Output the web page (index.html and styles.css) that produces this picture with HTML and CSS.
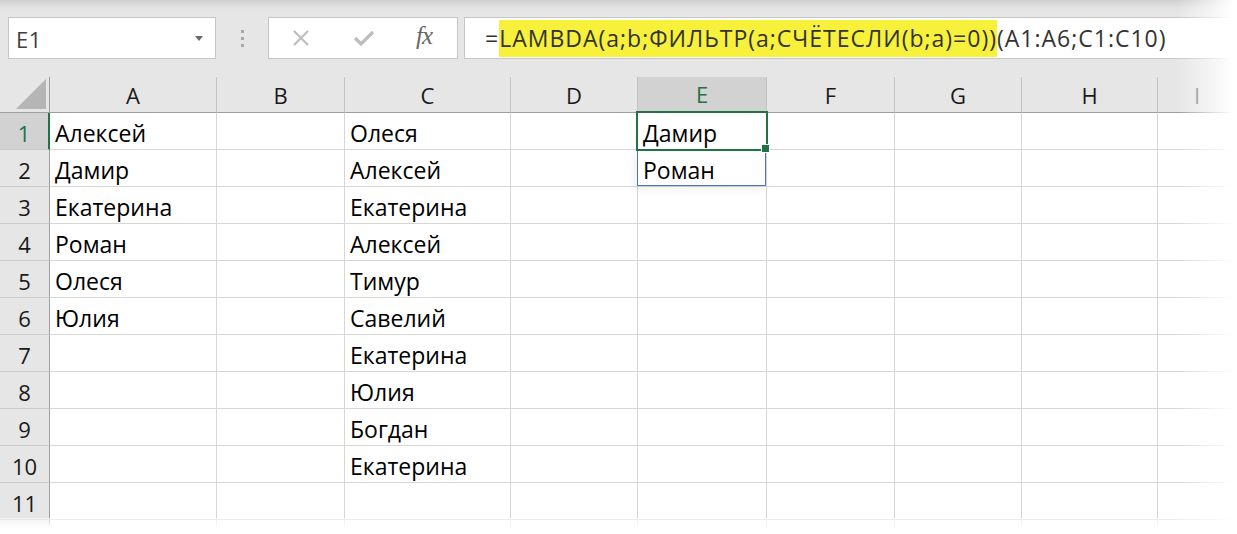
FILE: index.html
```html
<!DOCTYPE html>
<html lang="ru">
<head>
<meta charset="utf-8">
<title>Excel LAMBDA</title>
<link rel="stylesheet" href="styles.css">
</head>
<body>
<div class="app">
  <div class="toolbar">
    <div class="namebox">
      <span class="namebox-text">E1</span>
      <svg class="caret" width="8" height="5" viewBox="0 0 8 5"><polygon points="0,0 8,0 4,5" fill="#6b6b6b"/></svg>
    </div>
    <div class="grip"><i></i><i></i><i></i></div>
    <div class="fxbox">
      <svg class="ic" width="18" height="18" viewBox="0 0 18 18"><path d="M2 2 L16 16 M16 2 L2 16" stroke="#bdbdbd" stroke-width="2.2" fill="none"/></svg>
      <svg class="ic" width="22" height="18" viewBox="0 0 22 18"><path d="M2 9 L8 15 L20 3" stroke="#bdbdbd" stroke-width="3.2" fill="none"/></svg>
      <span class="fx">fx</span>
    </div>
    <div class="formula"><span class="eq">=</span><span class="hl">LAMBDA(a;b;ФИЛЬТР(a;СЧЁТЕСЛИ(b;a)=0))</span><span>(A1:A6;C1:C10)</span></div>
  </div>

  <div class="sheet">
    <div class="corner"><svg width="30" height="30" viewBox="0 0 30 30"><polygon points="0,30 30,30 30,0" fill="#b5b5b5"/></svg></div>
    <div class="ch">A</div><div class="ch">B</div><div class="ch">C</div><div class="ch">D</div><div class="ch ch-sel">E</div><div class="ch">F</div><div class="ch">G</div><div class="ch">H</div><div class="ch ch-last">I</div>

    <div class="rh rh-sel">1</div><div class="c">Алексей</div><div class="c"></div><div class="c">Олеся</div><div class="c"></div><div class="c c-active">Дамир</div><div class="c"></div><div class="c"></div><div class="c"></div><div class="c"></div>
    <div class="rh">2</div><div class="c">Дамир</div><div class="c"></div><div class="c">Алексей</div><div class="c"></div><div class="c c-spill">Роман</div><div class="c"></div><div class="c"></div><div class="c"></div><div class="c"></div>
    <div class="rh">3</div><div class="c">Екатерина</div><div class="c"></div><div class="c">Екатерина</div><div class="c"></div><div class="c"></div><div class="c"></div><div class="c"></div><div class="c"></div><div class="c"></div>
    <div class="rh">4</div><div class="c">Роман</div><div class="c"></div><div class="c">Алексей</div><div class="c"></div><div class="c"></div><div class="c"></div><div class="c"></div><div class="c"></div><div class="c"></div>
    <div class="rh">5</div><div class="c">Олеся</div><div class="c"></div><div class="c">Тимур</div><div class="c"></div><div class="c"></div><div class="c"></div><div class="c"></div><div class="c"></div><div class="c"></div>
    <div class="rh">6</div><div class="c">Юлия</div><div class="c"></div><div class="c">Савелий</div><div class="c"></div><div class="c"></div><div class="c"></div><div class="c"></div><div class="c"></div><div class="c"></div>
    <div class="rh">7</div><div class="c"></div><div class="c"></div><div class="c">Екатерина</div><div class="c"></div><div class="c"></div><div class="c"></div><div class="c"></div><div class="c"></div><div class="c"></div>
    <div class="rh">8</div><div class="c"></div><div class="c"></div><div class="c">Юлия</div><div class="c"></div><div class="c"></div><div class="c"></div><div class="c"></div><div class="c"></div><div class="c"></div>
    <div class="rh">9</div><div class="c"></div><div class="c"></div><div class="c">Богдан</div><div class="c"></div><div class="c"></div><div class="c"></div><div class="c"></div><div class="c"></div><div class="c"></div>
    <div class="rh">10</div><div class="c"></div><div class="c"></div><div class="c">Екатерина</div><div class="c"></div><div class="c"></div><div class="c"></div><div class="c"></div><div class="c"></div><div class="c"></div>
    <div class="rh">11</div><div class="c"></div><div class="c"></div><div class="c"></div><div class="c"></div><div class="c"></div><div class="c"></div><div class="c"></div><div class="c"></div><div class="c"></div>
    <div class="rh"></div><div class="c"></div><div class="c"></div><div class="c"></div><div class="c"></div><div class="c"></div><div class="c"></div><div class="c"></div><div class="c"></div><div class="c"></div>
  </div>

  <div class="fade-right"></div>
  <div class="fade-bottom"></div>
</div>
</body>
</html>
```

FILE: styles.css
```css
* { box-sizing: border-box; }
html, body { margin: 0; padding: 0; background: #fff; }
body { font-family: "Open Sans", "Noto Sans", sans-serif; overflow: hidden; }

.app {
  position: relative;
  width: 1237px;
  height: 534px;
  overflow: hidden;
}

.toolbar {
  height: 77px;
  background: linear-gradient(#cfcfcf 0px, #e2e2e2 8px, #e6e6e6 14px);
  display: flex;
  align-items: flex-start;
  padding: 17px 0 0 8px;
}

.namebox {
  width: 208px;
  height: 42px;
  background: #fff;
  border: 1px solid #c6c6c6;
  display: flex;
  align-items: center;
  justify-content: space-between;
  padding: 0 12px 0 7px;
}
.namebox-text { font-size: 22px; color: #404040; letter-spacing: 0.5px; margin-top: 1px; }
.caret { margin-top: 1px; }

.grip {
  width: 52px;
  height: 42px;
  display: flex;
  flex-direction: column;
  align-items: center;
  justify-content: center;
  gap: 4px;
}
.grip i { display: block; width: 3px; height: 3px; background: #a8a8a8; }

.fxbox {
  width: 190px;
  height: 42px;
  background: #fff;
  border: 1px solid #c6c6c6;
  display: flex;
  align-items: center;
  padding: 0 0 0 23px;
}
.fxbox .ic:nth-child(1) { margin-right: 43px; }
.fxbox .ic:nth-child(2) { margin-right: 41px; }
.fx {
  font-family: "Liberation Serif", "DejaVu Serif", serif;
  font-style: italic;
  font-size: 25px;
  color: #666;
  letter-spacing: -1px;
  margin-top: -4px;
}

.formula {
  margin-left: 6px;
  flex: 1;
  height: 42px;
  background: #fff;
  border: 1px solid #c6c6c6;
  border-right: 0;
  display: flex;
  align-items: center;
  padding-left: 20px;
  font-size: 23px;
  letter-spacing: 1px;
  color: #333;
  white-space: nowrap;
}
.hl {
  background: #f8f13c;
  padding: 2px 0 3px;
}

.sheet {
  display: grid;
  grid-template-columns: 50px 167px 128px 166px 127px 129px 128px 127px 136px 1fr;
  grid-template-rows: 36px repeat(12, 37px);
}

.corner {
  background: #e6e6e6;
  border-right: 1px solid #9e9e9e;
  border-bottom: 1px solid #9e9e9e;
  display: flex;
  align-items: flex-end;
  justify-content: flex-end;
  padding: 0 3px 3px 0;
}

.ch {
  background: #e6e6e6;
  border-right: 1px solid #c4c4c4;
  border-bottom: 1px solid #9e9e9e;
  display: flex;
  align-items: center;
  justify-content: center;
  font-size: 22px;
  color: #1a1a1a;
}
.ch-sel {
  background: #d2d2d2;
  color: #217346;
  border-bottom: 2px solid #217346;
}
.ch-last { color: #777; }

.rh {
  background: #e6e6e6;
  border-right: 1px solid #9e9e9e;
  border-bottom: 1px solid #cbcbcb;
  display: flex;
  align-items: center;
  justify-content: center;
  font-size: 22px;
  color: #1a1a1a;
  padding-top: 3px;
}
.rh-sel {
  background: #d2d2d2;
  color: #217346;
  border-right: 2px solid #217346;
}

.c {
  border-right: 1px solid #d6d6d6;
  border-bottom: 1px solid #d6d6d6;
  font-size: 23px;
  color: #000;
  padding: 4px 0 0 5px;
  line-height: 33px;
  white-space: nowrap;
  position: relative;
}

.c-active::after {
  content: "";
  position: absolute;
  left: -2px;
  top: -2px;
  right: -2px;
  bottom: -2px;
  border: 2px solid #217346;
  z-index: 2;
}
.c-active::before {
  content: "";
  position: absolute;
  right: -4px;
  bottom: -4px;
  width: 7px;
  height: 7px;
  background: #217346;
  border: 1px solid #fff;
  z-index: 3;
}
.c-spill::after {
  content: "";
  position: absolute;
  left: -1px;
  top: 0;
  right: 0;
  bottom: 0;
  border: 1px solid #4a76c0;
  border-top: 0;
  box-shadow: -3px 4px 8px rgba(0,0,0,0.06);
  z-index: 1;
}

.fade-right {
  position: absolute;
  top: 0;
  right: 0;
  width: 60px;
  height: 534px;
  background: linear-gradient(to right, rgba(255,255,255,0), #fff 95%);
  pointer-events: none;
}
.fade-bottom {
  position: absolute;
  left: 0;
  bottom: 0;
  width: 1237px;
  height: 16px;
  background: linear-gradient(rgba(255,255,255,0.5), #fff 70%);
  pointer-events: none;
}
```
